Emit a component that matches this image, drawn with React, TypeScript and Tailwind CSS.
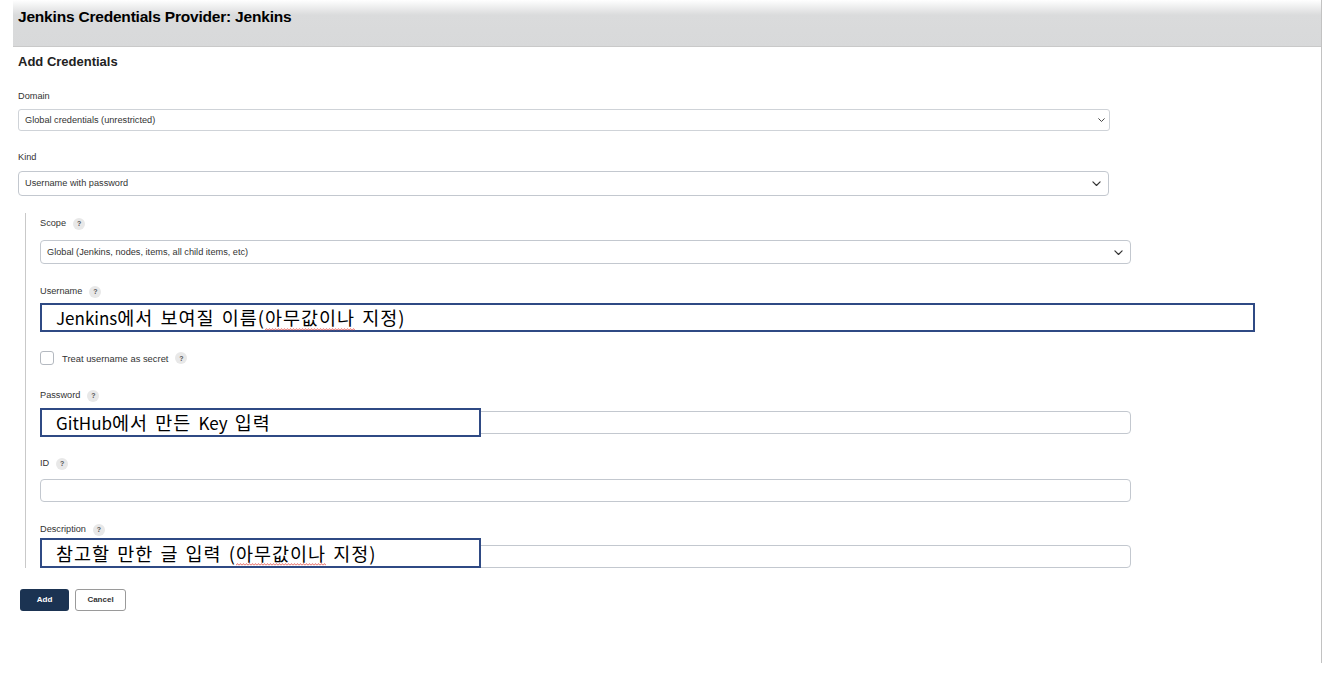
import React from "react";

function Help() {
  return (
    <span className="ml-[7px] inline-flex h-[12px] w-[12px] items-center justify-center rounded-full bg-[#e8e8e8] text-[7px] font-bold leading-none text-[#555]">
      ?
    </span>
  );
}

function Label({ text }: { text: string }) {
  return (
    <div className="flex h-[12px] items-center pt-[1px] text-[9.2px] leading-none text-[#333]">
      <span>{text}</span>
      <Help />
    </div>
  );
}

function Chevron({ size }: { size: number }) {
  return (
    <svg width={size} height={size * 0.6} viewBox="0 0 10 6" fill="none">
      <path d="M1 1 L5 5 L9 1" stroke="#333" strokeWidth="1.3" strokeLinecap="round" strokeLinejoin="round" />
    </svg>
  );
}

function Korean({ children }: { children: React.ReactNode }) {
  return (
    <span className="font-['Noto_Sans_CJK_KR','Noto_Sans',sans-serif] text-[18.5px] leading-none tracking-[1px] [word-spacing:2px] text-black">
      {children}
    </span>
  );
}

function Lat({ children }: { children: React.ReactNode }) {
  return <span className="text-[17px] tracking-normal">{children}</span>;
}

function Squiggle({ children, id }: { children: React.ReactNode; id: string }) {
  return (
    <span className="relative inline-block">
      {children}
      <svg className="absolute bottom-[-4px] left-0 h-[3px] w-full" preserveAspectRatio="none">
        <defs>
          <pattern id={id} patternUnits="userSpaceOnUse" width="3" height="3">
            <path d="M0 2.4 L1.5 0.6 L3 2.4" fill="none" stroke="#e2453c" strokeWidth="0.8" />
          </pattern>
        </defs>
        <rect x="0" y="0" width="100%" height="3" fill={`url(#${id})`} />
      </svg>
    </span>
  );
}

export default function App() {
  return (
    <div className="relative h-[663px] w-[1322px] border-r border-[#c2c2c2] bg-white font-['Liberation_Sans',Arial,sans-serif] text-[#333]">
      <div className="ml-[13px] h-[47px] border-b border-[#c9c9c9] bg-[linear-gradient(to_bottom,#ffffff_0px,#dadbdc_15px,#d8d9da_100%)] pl-[5px] pt-[8px]">
        <h1 className="text-[15.5px] font-bold leading-[17px] tracking-[-0.2px] text-black">
          Jenkins Credentials Provider: Jenkins
        </h1>
      </div>

      <div className="pl-[18px]">
        <h2 className="mt-[8px] text-[13px] font-bold leading-[14px] text-[#222]">Add Credentials</h2>

        <div className="mt-[21px] flex h-[11px] items-center pt-[2px] text-[9.2px] leading-none">Domain</div>
        <div className="mt-[8px] flex h-[22px] w-[1092px] items-center justify-between rounded-[3px] border border-[#cfd3d8] pl-[6px] pr-[4px] pt-[1px] text-[9.2px]">
          <span>Global credentials (unrestricted)</span>
          <Chevron size={7} />
        </div>

        <div className="mt-[20px] flex h-[11px] items-center pt-[2px] text-[9.2px] leading-none">Kind</div>
        <div className="mt-[9px] flex h-[25px] w-[1091px] items-center justify-between rounded-[4px] border border-[#c3c8cf] pl-[6px] pr-[7px] pt-[1px] text-[9.2px]">
          <span>Username with password</span>
          <Chevron size={9} />
        </div>

        <div className="ml-[7px] mt-[17px] w-[1250px] border-l border-[#c9c9c9] pb-0 pl-[14px] pt-[4px]">
          <Label text="Scope" />
          <div className="mt-[11px] flex h-[24px] w-[1091px] items-center justify-between rounded-[4px] border border-[#c3c8cf] pl-[6px] pr-[7px] pt-[1px] text-[9.2px]">
            <span>Global (Jenkins, nodes, items, all child items, etc)</span>
            <Chevron size={9} />
          </div>

          <div className="mt-[21px]">
            <Label text="Username" />
          </div>
          <div className="relative mt-[9px] h-[23px] w-[1091px] rounded-[4px] border border-[#c3c8cf]">
            <div className="absolute left-[-1px] top-[-4px] flex h-[29px] w-[1215px] items-center border-2 border-[#2f4a84] bg-white pl-[14px]">
              <Korean>
                <Lat>Jenkins</Lat>에서 보여질 이름(<Squiggle id="sq1">아무값이나</Squiggle> 지정)
              </Korean>
            </div>
          </div>

          <div className="mt-[22px] flex h-[14px] items-center">
            <span className="h-[14px] w-[14px] rounded-[3px] border border-[#b4b9c0] bg-white" />
            <span className="ml-[8px] pt-[1px] text-[9.4px] leading-none">Treat username as secret</span>
            <Help />
          </div>

          <div className="mt-[24px]">
            <Label text="Password" />
          </div>
          <div className="relative mt-[10px] h-[23px] w-[1091px] rounded-[4px] border border-[#c3c8cf]">
            <div className="absolute left-[-1px] top-[-4px] flex h-[29px] w-[441px] items-center border-2 border-[#2f4a84] bg-white pl-[14px]">
              <Korean>
                <Lat>GitHub</Lat>에서 만든 <Lat>Key</Lat> 입력
              </Korean>
            </div>
          </div>

          <div className="mt-[23px]">
            <Label text="ID" />
          </div>
          <div className="mt-[10px] h-[23px] w-[1091px] rounded-[4px] border border-[#c3c8cf]" />

          <div className="mt-[21px]">
            <Label text="Description" />
          </div>
          <div className="relative mt-[10px] h-[23px] w-[1091px] rounded-[4px] border border-[#c3c8cf]">
            <div className="absolute left-[-1px] top-[-8px] flex h-[30px] w-[441px] items-center border-2 border-[#2f4a84] bg-white pl-[14px]">
              <Korean>
                참고할 만한 글 입력 (<Squiggle id="sq2">아무값이나</Squiggle> 지정)
              </Korean>
            </div>
          </div>
        </div>

        <div className="ml-[2px] mt-[21px] flex gap-[6px]">
          <button className="flex h-[22px] w-[49px] items-center justify-center rounded-[3px] bg-[#1b3352] text-[8px] font-bold text-white">
            Add
          </button>
          <button className="flex h-[22px] w-[51px] items-center justify-center rounded-[3px] border border-[#9a9a9a] bg-white text-[8px] font-bold text-[#333]">
            Cancel
          </button>
        </div>
      </div>
    </div>
  );
}
